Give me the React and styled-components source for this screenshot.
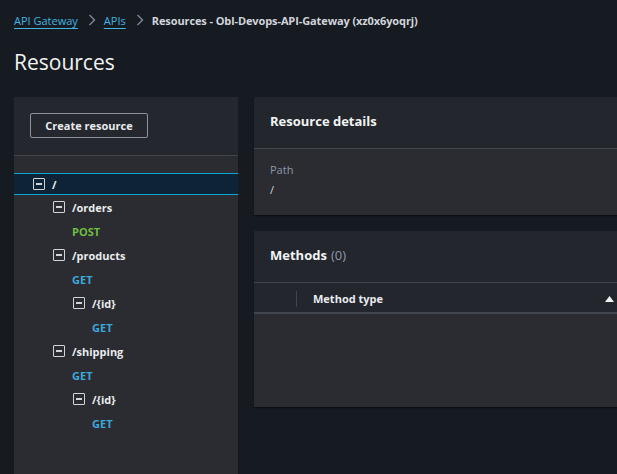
import React from "react";
import styled, { createGlobalStyle } from "styled-components";

const Global = createGlobalStyle`
  html, body {
    margin: 0;
    padding: 0;
    background: #161a21;
    overflow: hidden;
  }
  body {
    font-family: "Open Sans", "Noto Sans", sans-serif;
    color: #e9ebed;
  }
`;

const Page = styled.div`
  width: 617px;
  height: 474px;
  overflow: hidden;
  padding: 0 0 0 14px;
  box-sizing: border-box;
`;

const Crumbs = styled.nav`
  display: flex;
  align-items: center;
  height: 20px;
  margin-top: 10px;
  font-size: 11px;
  white-space: nowrap;
`;

const CrumbLink = styled.a`
  color: #42b4e0;
  text-decoration: underline;
  text-underline-offset: 3px;
`;

const Chevron = styled.span`
  display: inline-flex;
  margin: 0 8px 0 10px;
  color: #7d8998;
`;

const Current = styled.span`
  font-weight: 700;
  color: #d1d5db;
  letter-spacing: -0.1px;
`;

const Title = styled.h1`
  margin: 18px 0 0;
  height: 49px;
  font-size: 21px;
  font-weight: 400;
  color: #f2f3f3;
`;

const Layout = styled.div`
  display: flex;
  gap: 16px;
  align-items: flex-start;
`;

const Sidebar = styled.aside`
  width: 224px;
  height: 400px;
  flex-shrink: 0;
  background: #2a2c31;
`;

const SideTop = styled.div`
  height: 59px;
  padding: 16px 0 0 16px;
  box-sizing: border-box;
  background: #24272d;
  border-bottom: 1px solid #41454d;
`;

const Button = styled.button`
  width: 118px;
  height: 25px;
  border: 1px solid #8d949c;
  border-radius: 2px;
  background: transparent;
  color: #e9ebed;
  font-family: inherit;
  font-size: 11px;
  font-weight: 700;
  cursor: pointer;
`;

const Tree = styled.ul`
  list-style: none;
  margin: 17px 0 0;
  padding: 0;
`;

const Row = styled.li`
  display: flex;
  align-items: center;
  height: ${(p) => (p.$selected ? "20px" : "24px")};
  padding-left: ${(p) => 19 + p.$level * 20}px;
  background: ${(p) => (p.$selected ? "#0f2336" : "transparent")};
  border-top: ${(p) => (p.$selected ? "1px solid #0aa5d8" : "none")};
  border-bottom: ${(p) => (p.$selected ? "1px solid #0aa5d8" : "none")};
  font-size: 11px;
  font-weight: 700;
`;

const Toggle = styled.span`
  width: 10px;
  height: 10px;
  border: 1px solid #d1d5db;
  border-radius: 1px;
  margin-right: 7px;
  display: flex;
  align-items: center;
  justify-content: center;
  &::after {
    content: "";
    width: 6px;
    height: 2px;
    background: #d1d5db;
  }
`;

const PathName = styled.span`
  color: #e9ebed;
`;

const Method = styled.span`
  margin-left: 19px;
  color: ${(p) => (p.$verb === "POST" ? "#6dbf40" : "#3ea8dd")};
`;

const Main = styled.div`
  width: 420px;
  flex-shrink: 0;
  display: flex;
  flex-direction: column;
  gap: 16px;
`;

const Card = styled.section`
  background: #2a2c31;
  box-shadow: 0 1px 1px #0b0d11;
`;

const CardHeader = styled.header`
  height: 52px;
  box-sizing: border-box;
  padding: 0 0 3px 16px;
  display: flex;
  align-items: center;
  background: #23262d;
  border-bottom: 1px solid #41454d;
  font-size: 13px;
  font-weight: 700;
  color: #f2f3f3;
`;

const Count = styled.span`
  font-weight: 400;
  color: #8d99a8;
  margin-left: 4px;
`;

const CardBody = styled.div`
  padding: 12px 16px 14px;
  font-size: 11px;
`;

const Label = styled.div`
  color: #8d99a8;
  line-height: 18px;
`;

const Value = styled.div`
  color: #d1d5db;
  line-height: 22px;
`;

const TableHead = styled.div`
  height: 31px;
  box-sizing: border-box;
  padding-top: 2px;
  display: flex;
  align-items: center;
  background: #23262d;
  border-bottom: 2px solid #41454d;
  font-size: 11px;
  font-weight: 700;
`;

const ColDivider = styled.span`
  width: 1px;
  height: 16px;
  margin-left: 42px;
  margin-right: 16px;
  background: #41454d;
`;

const ColTitle = styled.span`
  flex: 1;
`;

const SortIcon = styled.svg`
  margin-right: 60px;
`;

const TableBody = styled.div`
  height: 93px;
`;

const tree = [
  { type: "path", name: "/", level: 0, selected: true },
  { type: "path", name: "/orders", level: 1 },
  { type: "method", name: "POST", level: 1 },
  { type: "path", name: "/products", level: 1 },
  { type: "method", name: "GET", level: 1 },
  { type: "path", name: "/{id}", level: 2 },
  { type: "method", name: "GET", level: 2 },
  { type: "path", name: "/shipping", level: 1 },
  { type: "method", name: "GET", level: 1 },
  { type: "path", name: "/{id}", level: 2 },
  { type: "method", name: "GET", level: 2 },
];

function Chev() {
  return (
    <Chevron>
      <svg width="8" height="12" viewBox="0 0 8 12">
        <path d="M1.5 1l5 5-5 5" fill="none" stroke="currentColor" strokeWidth="1.4" />
      </svg>
    </Chevron>
  );
}

export default function App() {
  return (
    <Page>
      <Global />
      <Crumbs>
        <CrumbLink>API Gateway</CrumbLink>
        <Chev />
        <CrumbLink>APIs</CrumbLink>
        <Chev />
        <Current>Resources - Obl-Devops-API-Gateway (xz0x6yoqrj)</Current>
      </Crumbs>
      <Title>Resources</Title>
      <Layout>
        <Sidebar>
          <SideTop>
            <Button>Create resource</Button>
          </SideTop>
          <Tree>
            {tree.map((n, i) => (
              <Row key={i} $level={n.level} $selected={n.selected}>
                {n.type === "path" ? (
                  <>
                    <Toggle />
                    <PathName>{n.name}</PathName>
                  </>
                ) : (
                  <Method $verb={n.name}>{n.name}</Method>
                )}
              </Row>
            ))}
          </Tree>
        </Sidebar>
        <Main>
          <Card>
            <CardHeader>Resource details</CardHeader>
            <CardBody>
              <Label>Path</Label>
              <Value>/</Value>
            </CardBody>
          </Card>
          <Card>
            <CardHeader>
              Methods<Count>(0)</Count>
            </CardHeader>
            <TableHead>
              <ColDivider />
              <ColTitle>Method type</ColTitle>
              <SortIcon width="9" height="6" viewBox="0 0 9 6">
                <path d="M0 6L4.5 0 9 6z" fill="#f2f3f3" />
              </SortIcon>
            </TableHead>
            <TableBody />
          </Card>
        </Main>
      </Layout>
    </Page>
  );
}
